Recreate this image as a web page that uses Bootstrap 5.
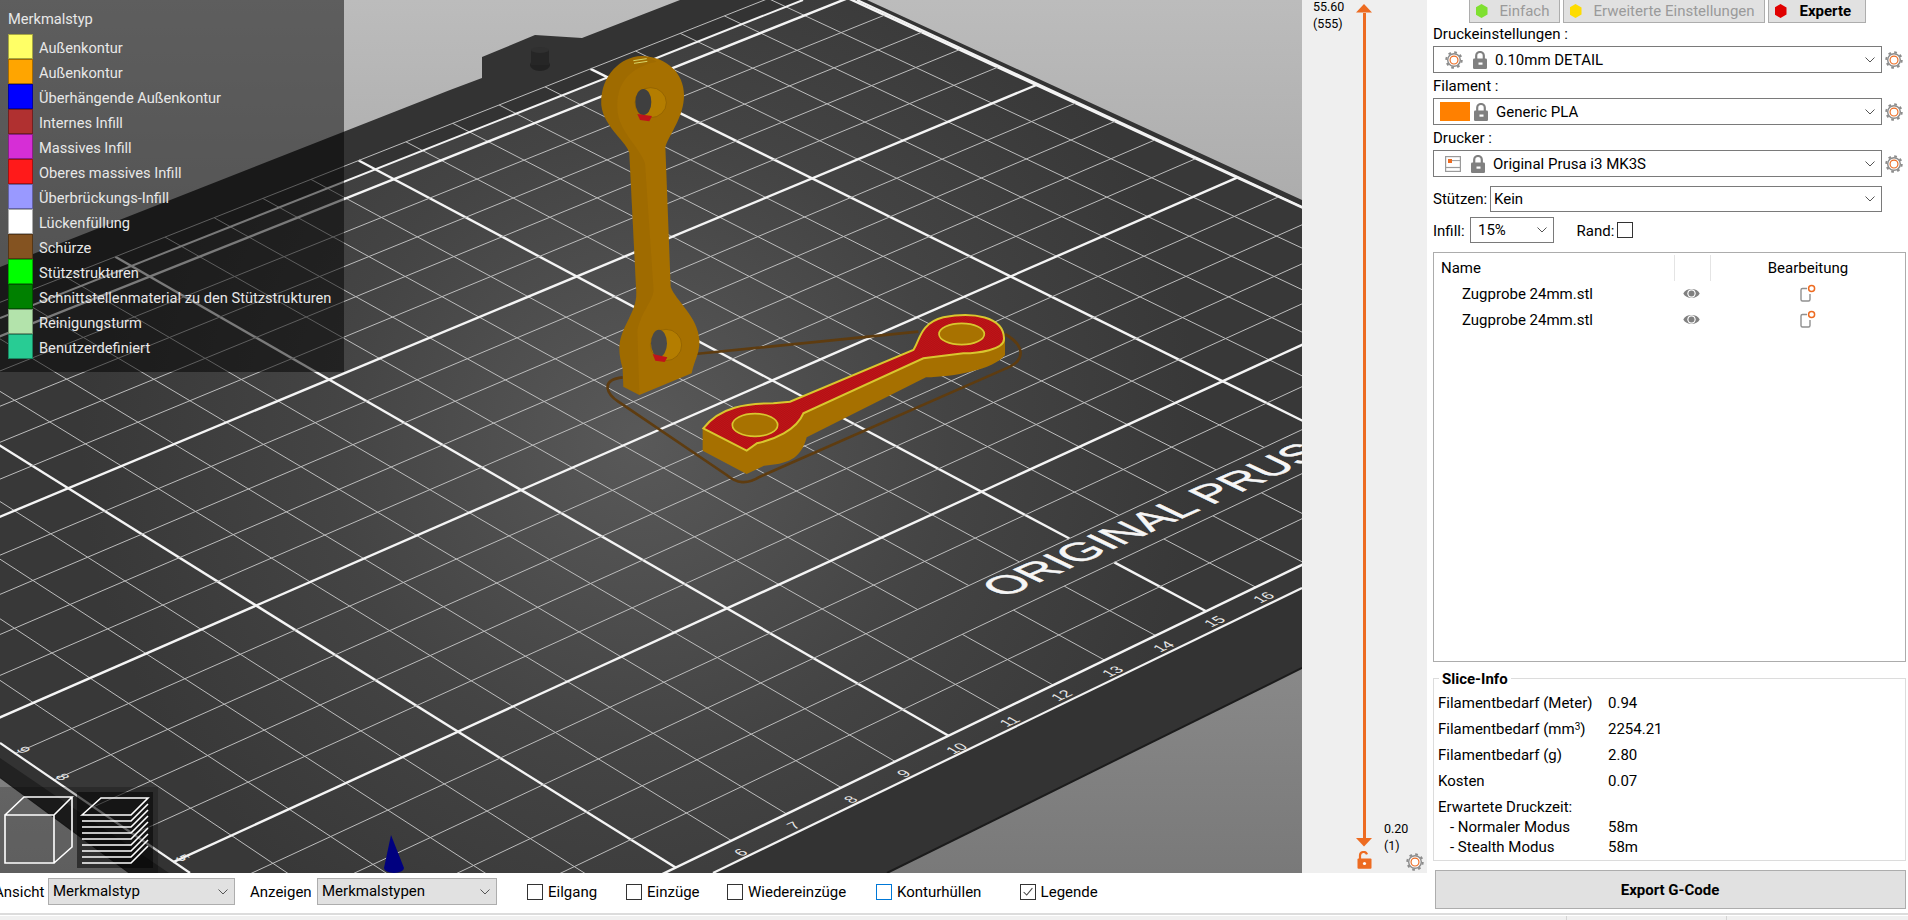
<!DOCTYPE html>
<html lang="de">
<head>
  <meta charset="UTF-8" />
  <title>PrusaSlicer – Vorschau</title>
  <link href="https://cdn.jsdelivr.net/npm/bootstrap@5.3.2/dist/css/bootstrap.min.css" rel="stylesheet"/>
  <style>
    html, body { height: 100%; overflow: hidden; }
    body { background: #fff; color: #000; font-family: Roboto, "Liberation Sans", sans-serif; font-size: 15px; line-height: 20px; }
    .app-main { height: 913px; }
    .left-col { width: 1427px; }
    .view-row { height: 873px; }
    .canvas-wrap { width: 1302px; height: 873px; background: linear-gradient(#bcbcbc, #797979); }
    .canvas-wrap svg { display: block; }
    .legend-box { top: 0; left: 0; width: 344px; height: 372px; background: rgba(0,0,0,.5); color: #e8e8e8; padding: 9px 0 0 8px; font-size: 14.65px; }
    .legend-title { height: 25px; }
    .legend-row { height: 25px; gap: 6px; }
    .legend-row span:last-child { padding-top: 2px; }
    .sw { width: 25px; height: 25px; border: 1px solid rgba(0,0,0,.35); flex: none; }
    .sw1 { background: #ffff66; } .sw2 { background: #ffa500; } .sw3 { background: #0000ff; }
    .sw4 { background: #b03030; } .sw5 { background: #d62ed6; } .sw6 { background: #ff1a1a; }
    .sw7 { background: #9999ff; } .sw8 { background: #fff; border-color: #aaa; } .sw9 { background: #845321; }
    .sw10 { background: #00ff00; } .sw11 { background: #008000; } .sw12 { background: #b3e3ab; } .sw13 { background: #28cc94; }

    .slider-panel { width: 125px; background: #efefef; display: grid; grid-template-columns: 43px 16px 1fr; padding: 0 0 2px 11px; font-size: 12.5px; line-height: 17px; }
    .slider-top { margin-top: -2px; }
    .slider-track { padding-top: 4px; }
    .slider-line { width: 3px; background: #ed6b21; }
    .slider-lock { margin: 4px 0 2px; }
    .slider-end { padding-left: 12px; }
    .slider-low { margin-bottom: -1px; }
    .slider-low span { display: block; }
    .gear-low { margin-left: 22px; }

    .tool-bar { height: 40px; display: grid; grid-template-columns: 48px 187px 15px 67px 180px 30px 99px 101px 149px 143.6px auto; align-items: center; padding-bottom: 3px; }
    .tool-bar label { white-space: nowrap; }
    .lbl-cut { margin-left: -6px; }
    .tool-sel { height: 27px; border: 1px solid #adadad; border-width: 1.5px; background: #e1e1e1 url("data:image/svg+xml,%3Csvg xmlns='http://www.w3.org/2000/svg' width='10' height='6'%3E%3Cpath d='M.5.5 5 5 9.5.5' fill='none' stroke='%23555'/%3E%3C/svg%3E") no-repeat right 6px center; padding: 0 0 0 4px; border-radius: 0; font-size: 15px; line-height: 24px; color: #000; }
    .chk-item { gap: 5px; }
    .chk-box { width: 16px; height: 16px; margin: 0; border: 1px solid #333; flex: none; }
    .chk-blue { border-color: #0078d7; }
    .chk-box:checked { background-color: #fff; border-color: #333; background-image: url("data:image/svg+xml,%3Csvg xmlns='http://www.w3.org/2000/svg' viewBox='0 0 16 16'%3E%3Cpath d='M3 8l3.5 3.5L13 3.5' fill='none' stroke='%23444' stroke-width='1.2'/%3E%3C/svg%3E"); }

    .side-col { width: 481px; padding: 0 2px 4px 6px; }
    .mode-tabs { height: 23px; gap: 3px; margin-left: 35.5px; }
    .mode-btn { height: 23px; border: 1px solid #adadad; border-top: 0; border-radius: 0; background: #e1e1e1; color: #9a9a9a; padding: 0 0 0 6px; font-size: 15px; line-height: 21px; gap: 12px; display: flex; align-items: center; }
    .mode-a { width: 91px; } .mode-b { width: 202px; } .mode-c { width: 98px; color: #000; font-weight: 700; gap: 13px; }
    .hex { width: 12px; height: 14px; clip-path: polygon(50% 0, 100% 25%, 100% 75%, 50% 100%, 0 75%, 0 25%); flex: none; }
    .hex-g { background: #7fe030; } .hex-y { background: #fddc00; } .hex-r { background: #e00000; }
    .pre-label { height: 25px; padding-bottom: 2px; }
    .pre-first { height: 23px; }
    .combo-row { height: 27px; gap: 3px; }
    .combo { width: 448.5px; height: 27px; border: 1px solid #7a7a7a; border-width: 1.3px; border-radius: 0; padding: 0; font-size: 15px; line-height: 20px; color: #000; background-image: url("data:image/svg+xml,%3Csvg xmlns='http://www.w3.org/2000/svg' width='10' height='6'%3E%3Cpath d='M.5.5 5 5 9.5.5' fill='none' stroke='%23555'/%3E%3C/svg%3E"); background-size: 10px 6px; background-position: right 6px center; }
    .combo-i { margin-left: 11px; }
    .combo-sw { width: 30px; height: 19px; background: #ff8000; margin-left: 6px; }
    .lk { margin: 0 8px 0 10px; }
    .lk2 { margin: 0 8px 0 4px; }
    .opt-row { margin-top: 9px; height: 26px; }
    .opt-row2 { margin-top: 5px; height: 26px; }
    .opt-row2 label { padding-top: 2px; }
    .lbl-st { width: 57px; } .lbl-in { width: 37px; }
    .sel-st { width: 391.5px; height: 26px; padding-left: 3px; }
    .sel-in { width: 83.5px; height: 26px; padding-left: 7px; }
    .rand-lbl { margin-left: 23px; width: 40px; }
    .chk-rand { width: 16px; height: 16px; }

    .obj-list { margin-top: 9px; border: 1.3px solid #acacac; min-height: 0; padding-top: 1px; }
    .obj-head, .obj-row { display: grid; grid-template-columns: 240px 36px 1fr; }
    .obj-head { height: 27px; align-items: center; }
    .obj-head > div { height: 26px; line-height: 26px; }
    .obj-name { padding-left: 7px; }
    .obj-sep { border-left: 1px solid #e4e4e4; }
    .obj-sep2 { border-left: 1px solid #e4e4e4; text-align: center; }
    .obj-row { height: 26px; line-height: 26px; }
    .obj-row .obj-name { padding-left: 28px; }
    .eye-i { margin: -2px 0 0 9px; }
    .edit-i { margin-top: -2px; }

    .slice-box { margin-top: 16px; border: 1px solid #dcdcdc; padding: 0 0 4px 4px; height: 183px; }
    .slice-title { font-weight: 700; margin: -10px 0 1px 1px; padding: 0 3px; background: #fff; width: fit-content; height: 20px; }
    .slice-row { display: grid; grid-template-columns: 170px 1fr; height: 26px; line-height: 26px; }
    .slice-row2 { height: 20px; line-height: 20px; }
    .slice-gap { margin-top: 3px; }
    .slice-sub { padding-left: 12px; }
    .slice-box sup { font-size: 10px; top: -.4em; }
    .export-btn { margin: 9px 0 0 1.5px; width: 471px; height: 39px; background: #e1e1e1; border: 1.3px solid #adadad; border-radius: 0; font-weight: 700; font-size: 15px; color: #000; padding: 1px 0 0; }
    .export-btn:hover { background: #e1e1e1; color: #000; border-color: #adadad; }

    .status-bar { height: 7px; border-top: 2px solid #dcdcdc; }
    .status-in { margin-top: 1px; height: 4px; background: #f0f0f0; }
    .st-a { width: 1567px; border-right: 1px solid #d4d4d4; }
    .st-b { width: 160px; border-right: 1px solid #d4d4d4; }
  </style>
</head>
<body>

<svg width="0" height="0" class="position-absolute">
  <defs>
    <symbol id="ic-gear" viewBox="0 0 20 20">
      <circle cx="10" cy="10" r="8.6" fill="none" stroke="#8c8c8c" stroke-width="2.2" stroke-dasharray="3 3.75"/>
      <circle cx="10" cy="10" r="7" fill="#fff" stroke="#8c8c8c" stroke-width="1.6"/>
      <circle cx="10" cy="10" r="4.4" fill="#fff" stroke="#ed6b21" stroke-width="1.3"/>
    </symbol>
    <symbol id="ic-lock" viewBox="0 0 14 18">
      <path d="M3.2 8V4.8a3.8 3.8 0 0 1 7.6 0V8" fill="none" stroke="#808080" stroke-width="2.2"/>
      <rect x="0" y="7.5" width="14" height="10.5" rx="1.2" fill="#808080"/>
      <rect x="5.5" y="11.5" width="4" height="2.2" fill="#fff"/>
    </symbol>
    <symbol id="ic-unlock" viewBox="0 0 15 18">
      <path d="M3 8V4.6a3.6 3.6 0 0 1 7-1.2" fill="none" stroke="#ed6b21" stroke-width="2.2"/>
      <rect x="0.5" y="7.6" width="14" height="10.2" rx="1" fill="#ed6b21"/>
      <circle cx="7.5" cy="12.5" r="1.6" fill="#fff"/>
    </symbol>
    <symbol id="ic-printer" viewBox="0 0 16 16">
      <rect x=".6" y=".6" width="14.8" height="14.8" fill="#fff" stroke="#9a9a9a" stroke-width="1.2"/>
      <path d="M1 11.5h14" stroke="#9a9a9a" stroke-width="1.2"/>
      <rect x="3" y="3" width="4" height="4" fill="#ed6b21"/>
      <path d="M7 4.6h8" stroke="#9a9a9a"/>
    </symbol>
    <symbol id="ic-eye" viewBox="0 0 17 13">
      <path d="M.3 6.5C3 .6 14 .6 16.7 6.5 14 12.4 3 12.4.3 6.5Z" fill="#808080"/>
      <circle cx="8.5" cy="6.5" r="4.2" fill="#fff"/>
      <circle cx="8.5" cy="6.5" r="3" fill="#808080"/>
    </symbol>
    <symbol id="ic-edit" viewBox="0 0 16 18">
      <path d="M7 4.5H2.5A1.5 1.5 0 0 0 1 6v9.5A1.5 1.5 0 0 0 2.5 17h6a1.5 1.5 0 0 0 1.5-1.5V10" fill="none" stroke="#909090" stroke-width="1.4"/>
      <circle cx="11.6" cy="4.4" r="3" fill="#fff" stroke="#ed6b21" stroke-width="1.5"/>
    </symbol>
  </defs>
</svg>

<div class="d-flex app-main">
  <div class="left-col d-flex flex-column flex-none">
    <div class="d-flex view-row">

      <div class="canvas-wrap position-relative overflow-hidden">
        <svg id="scene" width="1302" height="873" viewBox="0 0 1302 873">
          <defs>
            <radialGradient id="bedGlow" gradientUnits="userSpaceOnUse" cx="640" cy="440" r="560">
              <stop offset="0" stop-color="#595959"/>
              <stop offset=".55" stop-color="#444"/>
              <stop offset="1" stop-color="#383838"/>
            </radialGradient>
            <pattern id="layerTex" width="3" height="3" patternUnits="userSpaceOnUse">
              <rect width="3" height="3" fill="#ab7400"/>
              <path d="M0 1h3" stroke="#996700" stroke-width="1.2"/>
            </pattern>
            <pattern id="redTex" width="5" height="5" patternUnits="userSpaceOnUse" patternTransform="rotate(35)">
              <rect width="5" height="5" fill="#cc141a"/>
              <path d="M0 2h5" stroke="#8f0f10" stroke-width="1.6"/>
            </pattern>
          </defs>
          <polygon fill="#333" points="0,267 450,90 482,78 482,57 535,35 582,38 680,0 867,0 1302,200 1302,668 887,873 130,873 0,777"/>
          <path d="M887 873 1302 668" stroke="#1c1c1c" stroke-width="2"/>
          <path d="M130 873 0 777" stroke="#1c1c1c" stroke-width="2"/>
          <polygon fill="#222" points="0,758 169,873 130,873 0,777"/>
          <ellipse cx="540" cy="65" rx="10" ry="6" fill="#222"/>
          <rect x="531" y="50" width="18" height="15" fill="#262626"/>
          <ellipse cx="540" cy="50" rx="9" ry="3" fill="#303030"/>
          <polygon fill="url(#bedGlow)" points="0,318 803,0 857,0 1302,207 1302,588 713,873 190,873 0,743"/>
          <g id="grid"></g>
          <path d="M0 318 803 0" stroke="#f2f2f2" stroke-width="2"/>
          <path d="M0 743 190 873" stroke="#f2f2f2" stroke-width="2.2"/>
          <path d="M713 873 1302 588" stroke="#f2f2f2" stroke-width="2.2"/>
          <path d="M857 0 1302 207" stroke="#f2f2f2" stroke-width="2.2"/>

          <text transform="matrix(.985 -.44 .92 .44 1004 598)" font-family="Liberation Sans" font-size="42" fill="#f6f6f6" stroke="#f6f6f6" stroke-width=".6">ORIGINAL PRUS</text>
          <g id="bed-nums" font-family="Liberation Sans" font-size="15" fill="#e6e6e6" text-anchor="middle"></g>

          <!-- standing and flat test pieces, traced in 3x coords -->
          <g transform="translate(560 30) scale(.33333)">
            <path d="M188 1042C160 1045 140 1055 143 1075 145 1090 160 1105 175 1115L500 1335C530 1360 560 1365 600 1340L1350 1010C1390 990 1400 950 1335 912M405 972 1075 905" fill="none" stroke="#5e3c10" stroke-width="8"/>
            <path fill="url(#layerTex)" d="M245 78C320 80 372 130 372 195 372 260 330 310 316 350L332 770C345 810 415 860 418 930 420 970 405 985 395 1030L238 1095 190 1070 188 1015C172 960 175 930 200 880 225 830 232 810 228 770L208 370C205 340 130 290 124 225 120 140 180 80 245 78Z"/>
            <path fill="#7a5200" fill-opacity=".16" d="M245 78C180 80 120 140 124 225 130 290 205 340 208 370L228 770C232 810 225 830 200 880 175 930 172 960 188 1015L190 1070 238 1095 232 900C250 830 285 810 280 770L255 400C240 350 170 300 172 230 170 160 210 110 290 95 275 85 260 78 245 78Z"/>
            <ellipse cx="272" cy="218" rx="47" ry="45" fill="#b47d00" stroke="#8a5c00" stroke-width="2"/>
            <ellipse cx="250" cy="216" rx="24" ry="39" fill="#3f3f3f"/>
            <path d="M232 252 276 258 268 274 240 270Z" fill="#c0141a"/>
            <path d="M220 92 260 86M222 100 262 94" stroke="#d8d868" stroke-width="3"/>
            <ellipse cx="318" cy="945" rx="47" ry="47" fill="#b47d00" stroke="#8a5c00" stroke-width="2"/>
            <ellipse cx="297" cy="940" rx="24" ry="41" fill="#4a4a4a"/>
            <path d="M278 972 322 982 314 996 286 992Z" fill="#c0141a"/>

            <path fill="url(#layerTex)" d="M428 1195V1262L560 1332 612 1307C680 1302 722 1290 740 1222L1098 1042C1180 1040 1300 1020 1335 975V920L1060 960 690 1115 430 1195Z"/>
            <path d="M430 1195C480 1130 560 1120 640 1120L690 1115 1060 960C1080 930 1080 880 1150 862 1240 845 1330 860 1332 925 1335 960 1250 970 1210 970L1090 985 730 1150C710 1200 640 1230 590 1240L560 1262Z" fill="url(#redTex)" stroke="#d9c72e" stroke-width="6"/>
            <ellipse cx="585" cy="1185" rx="68" ry="34" fill="#a87200" stroke="#d9c72e" stroke-width="5"/>
            <ellipse cx="1205" cy="912" rx="68" ry="32" fill="#a87200" stroke="#d9c72e" stroke-width="5"/>
          </g>

          <!-- z axis stub -->
          <path d="M391 835 404 868A10 5 0 0 1 384 868Z" fill="#00007f"/>

          <!-- view switch icons -->
          <rect x="0" y="787" width="158" height="86" fill="#000" fill-opacity=".22"/>
          <rect x="77" y="792" width="76" height="76" fill="#000" fill-opacity=".5"/>
          <g fill="none" stroke="#fff" stroke-width="1.6">
            <path d="M5 815H54V863H5ZM5 815 24 797H72L54 815M72 797V847L54 863"/>
            <path d="M82 815 101 798H148L131 815Z"/>
            <path d="M82 821H131L148 804M82 827H131L148 810M82 833H131L148 816M82 839H131L148 822M82 845H131L148 828M82 851H131L148 834M82 857H131L148 840M82 863H131L148 846"/>
          </g>
        </svg>

        <div class="legend-box position-absolute">
          <div class="legend-title">Merkmalstyp</div>
          <div class="d-flex align-items-center legend-row"><span class="sw sw1"></span><span>Außenkontur</span></div>
          <div class="d-flex align-items-center legend-row"><span class="sw sw2"></span><span>Außenkontur</span></div>
          <div class="d-flex align-items-center legend-row"><span class="sw sw3"></span><span>Überhängende Außenkontur</span></div>
          <div class="d-flex align-items-center legend-row"><span class="sw sw4"></span><span>Internes Infill</span></div>
          <div class="d-flex align-items-center legend-row"><span class="sw sw5"></span><span>Massives Infill</span></div>
          <div class="d-flex align-items-center legend-row"><span class="sw sw6"></span><span>Oberes massives Infill</span></div>
          <div class="d-flex align-items-center legend-row"><span class="sw sw7"></span><span>Überbrückungs-Infill</span></div>
          <div class="d-flex align-items-center legend-row"><span class="sw sw8"></span><span>Lückenfüllung</span></div>
          <div class="d-flex align-items-center legend-row"><span class="sw sw9"></span><span>Schürze</span></div>
          <div class="d-flex align-items-center legend-row"><span class="sw sw10"></span><span>Stützstrukturen</span></div>
          <div class="d-flex align-items-center legend-row"><span class="sw sw11"></span><span>Schnittstellenmaterial zu den Stützstrukturen</span></div>
          <div class="d-flex align-items-center legend-row"><span class="sw sw12"></span><span>Reinigungsturm</span></div>
          <div class="d-flex align-items-center legend-row"><span class="sw sw13"></span><span>Benutzerdefiniert</span></div>
        </div>
      </div>

      <div class="slider-panel">
        <div class="slider-top"><div>55.60</div><div>(555)</div></div>
        <div class="slider-track d-flex flex-column align-items-center">
          <svg width="16" height="9" class="flex-none d-block"><path d="M8 0 16 8.5H0Z" fill="#ed6b21"/></svg>
          <div class="slider-line flex-grow-1"></div>
          <svg width="16" height="9" class="flex-none d-block"><path d="M0 0H16L8 8.5Z" fill="#ed6b21"/></svg>
          <svg width="15" height="18" class="flex-none d-block slider-lock"><use href="#ic-unlock"/></svg>
        </div>
        <div class="slider-end d-flex flex-column justify-content-end">
          <div class="slider-low"><span>0.20</span><span>(1)</span></div>
          <svg width="18" height="18" class="gear-low d-block flex-none"><use href="#ic-gear"/></svg>
        </div>
      </div>
    </div>

    <div class="tool-bar">
      <label class="lbl-cut">Ansicht</label>
      <div class="tool-sel form-select">Merkmalstyp</div>
      <span></span>
      <label>Anzeigen</label>
      <div class="tool-sel form-select">Merkmalstypen</div>
      <span></span>
      <div class="d-flex align-items-center chk-item"><input type="checkbox" class="form-check-input chk-box rounded-0" id="c1"><label for="c1">Eilgang</label></div>
      <div class="d-flex align-items-center chk-item"><input type="checkbox" class="form-check-input chk-box rounded-0" id="c2"><label for="c2">Einzüge</label></div>
      <div class="d-flex align-items-center chk-item"><input type="checkbox" class="form-check-input chk-box rounded-0" id="c3"><label for="c3">Wiedereinzüge</label></div>
      <div class="d-flex align-items-center chk-item"><input type="checkbox" class="form-check-input chk-box chk-blue rounded-0" id="c4"><label for="c4">Konturhüllen</label></div>
      <div class="d-flex align-items-center chk-item"><input type="checkbox" class="form-check-input chk-box rounded-0" id="c5" checked><label for="c5">Legende</label></div>
    </div>
  </div>

  <div class="side-col d-flex flex-column">
    <div class="d-flex mode-tabs">
      <button class="btn mode-btn mode-a"><span class="hex hex-g"></span>Einfach</button>
      <button class="btn mode-btn mode-b"><span class="hex hex-y"></span>Erweiterte Einstellungen</button>
      <button class="btn mode-btn mode-c"><span class="hex hex-r"></span>Experte</button>
    </div>

    <div class="d-flex align-items-end pre-label pre-first">Druckeinstellungen :</div>
    <div class="d-flex align-items-center combo-row">
      <div class="form-select combo d-flex align-items-center">
        <svg width="18" height="18" class="combo-i"><use href="#ic-gear"/></svg>
        <svg width="14" height="18" class="lk"><use href="#ic-lock"/></svg>
        <span>0.10mm DETAIL</span>
      </div>
      <svg width="18" height="18"><use href="#ic-gear"/></svg>
    </div>

    <div class="d-flex align-items-end pre-label">Filament :</div>
    <div class="d-flex align-items-center combo-row">
      <div class="form-select combo d-flex align-items-center">
        <span class="combo-sw"></span>
        <svg width="14" height="18" class="lk2"><use href="#ic-lock"/></svg>
        <span>Generic PLA</span>
      </div>
      <svg width="18" height="18"><use href="#ic-gear"/></svg>
    </div>

    <div class="d-flex align-items-end pre-label">Drucker :</div>
    <div class="d-flex align-items-center combo-row">
      <div class="form-select combo d-flex align-items-center">
        <svg width="16" height="16" class="combo-i"><use href="#ic-printer"/></svg>
        <svg width="14" height="18" class="lk"><use href="#ic-lock"/></svg>
        <span>Original Prusa i3 MK3S</span>
      </div>
      <svg width="18" height="18"><use href="#ic-gear"/></svg>
    </div>

    <div class="d-flex align-items-center opt-row">
      <label class="lbl-st">Stützen:</label>
      <div class="form-select combo sel-st d-flex align-items-center">Kein</div>
    </div>
    <div class="d-flex align-items-center opt-row2">
      <label class="lbl-in">Infill:</label>
      <div class="form-select combo sel-in d-flex align-items-center">15%</div>
      <label class="rand-lbl" for="rand">Rand:</label>
      <input type="checkbox" class="form-check-input chk-box chk-rand rounded-0" id="rand">
    </div>

    <div class="obj-list flex-grow-1">
      <div class="obj-head">
        <div class="obj-name">Name</div>
        <div class="obj-sep"></div>
        <div class="obj-sep2">Bearbeitung</div>
      </div>
      <div class="obj-row">
        <div class="obj-name">Zugprobe 24mm.stl</div>
        <div class="d-flex align-items-center"><svg width="17" height="13" class="eye-i"><use href="#ic-eye"/></svg></div>
        <div class="d-flex align-items-center justify-content-center"><svg width="16" height="18" class="edit-i"><use href="#ic-edit"/></svg></div>
      </div>
      <div class="obj-row">
        <div class="obj-name">Zugprobe 24mm.stl</div>
        <div class="d-flex align-items-center"><svg width="17" height="13" class="eye-i"><use href="#ic-eye"/></svg></div>
        <div class="d-flex align-items-center justify-content-center"><svg width="16" height="18" class="edit-i"><use href="#ic-edit"/></svg></div>
      </div>
    </div>

    <div class="slice-box flex-none">
      <div class="slice-title">Slice-Info</div>
      <div class="slice-row"><span>Filamentbedarf (Meter)</span><span>0.94</span></div>
      <div class="slice-row"><span>Filamentbedarf (mm<sup>3</sup>)</span><span>2254.21</span></div>
      <div class="slice-row"><span>Filamentbedarf (g)</span><span>2.80</span></div>
      <div class="slice-row"><span>Kosten</span><span>0.07</span></div>
      <div class="slice-row slice-row2 slice-gap"><span>Erwartete Druckzeit:</span><span></span></div>
      <div class="slice-row slice-row2"><span class="slice-sub">- Normaler Modus</span><span>58m</span></div>
      <div class="slice-row slice-row2"><span class="slice-sub">- Stealth Modus</span><span>58m</span></div>
    </div>

    <button class="btn export-btn flex-none">Export G-Code</button>
  </div>
</div>

<div class="status-bar">
  <div class="status-in d-flex">
    <div class="st-a"></div>
    <div class="st-b"></div>
  </div>
</div>

<script>
// bed grid: fit a homography to measured line crossings (u, w, x, y)
const marks = [
  [5,0,675,868],[10,0,949,735],[15,0,1205,612],
  [5,5,458,732],[10,5,727,608],[15,5,982,491],[20,5,1223,381],
  [5,10,257,606],[10,10,519,490],[15,10,773,380],[20,10,1012,277],[25,10,1237,178],
  [5,15,69,488],[10,15,328,380],[20,15,813,178],[25,15,1035,85]
];

function fitH(pts) {
  const A = [], b = [];
  pts.forEach(p => {
    const u = p[0] / 25, w = p[1] / 20, x = p[2] / 1000, y = p[3] / 1000;
    A.push([u, w, 1, 0, 0, 0, -u * x, -w * x]); b.push(x);
    A.push([0, 0, 0, u, w, 1, -u * y, -w * y]); b.push(y);
  });
  const n = 8, M = [];
  for (let i = 0; i < n; i++) {
    M.push([]);
    for (let j = 0; j < n; j++) M[i].push(A.reduce((s, r) => s + r[i] * r[j], 0));
    M[i].push(A.reduce((s, r, k) => s + r[i] * b[k], 0));
  }
  for (let c = 0; c < n; c++) {
    let best = c;
    for (let r = c + 1; r < n; r++) if (Math.abs(M[r][c]) > Math.abs(M[best][c])) best = r;
    [M[c], M[best]] = [M[best], M[c]];
    for (let r = 0; r < n; r++) {
      if (r === c) continue;
      const f = M[r][c] / M[c][c];
      for (let k = c; k <= n; k++) M[r][k] -= f * M[c][k];
    }
  }
  return M.map((r, i) => r[n] / r[i]);
}

const H = fitH(marks);
function project(u0, w0) {
  const u = u0 / 25, w = w0 / 20, d = H[6] * u + H[7] * w + 1;
  return [1000 * (H[0] * u + H[1] * w + H[2]) / d, 1000 * (H[3] * u + H[4] * w + H[5]) / d];
}

let out = '';
function seg(a, b, major) {
  const w = major ? 2.4 : 1, c = major ? '#f4f4f4' : '#bdbdbd';
  out += `<line x1="${a[0].toFixed(1)}" y1="${a[1].toFixed(1)}" x2="${b[0].toFixed(1)}" y2="${b[1].toFixed(1)}" stroke="${c}" stroke-width="${w}"/>`;
}
for (let u = 0; u <= 25; u++) {
  const major = u % 5 === 0;
  if (u >= 12 && u < 25) {           // lines stop around the printed name
    seg(project(u, 0), project(u, 2), major);
    seg(project(u, 3), project(u, 21), major);
  } else if (u > 0) {
    seg(project(u, 0), project(u, 21), major);
  }
}
for (let w = 0; w <= 21; w++) seg(project(0, w), project(25, w), w % 5 === 0);
document.getElementById('grid').innerHTML = out;

// numbers along the two visible bed edges
const front = [[6,745,850],[7,798,823],[8,855,797],[9,908,771],[10,961,746],[11,1014,719],[12,1066,693],[13,1117,669],[14,1168,644],[15,1219,619],[16,1268,595]];
const side = [[9,23,750],[8,62,777],[5,182,858]];
let nums = '';
front.forEach(n => { nums += `<text transform="matrix(.92 -.42 .85 .5 ${n[1]} ${n[2] + 5})">${n[0]}</text>`; });
side.forEach(n => { nums += `<text transform="matrix(.85 .5 -.9 .42 ${n[1] - 4} ${n[2] + 2})">${n[0]}</text>`; });
document.getElementById('bed-nums').innerHTML = nums;
</script>
<script src="https://cdn.jsdelivr.net/npm/bootstrap@5.3.2/dist/js/bootstrap.bundle.min.js"></script>
</body>
</html>
